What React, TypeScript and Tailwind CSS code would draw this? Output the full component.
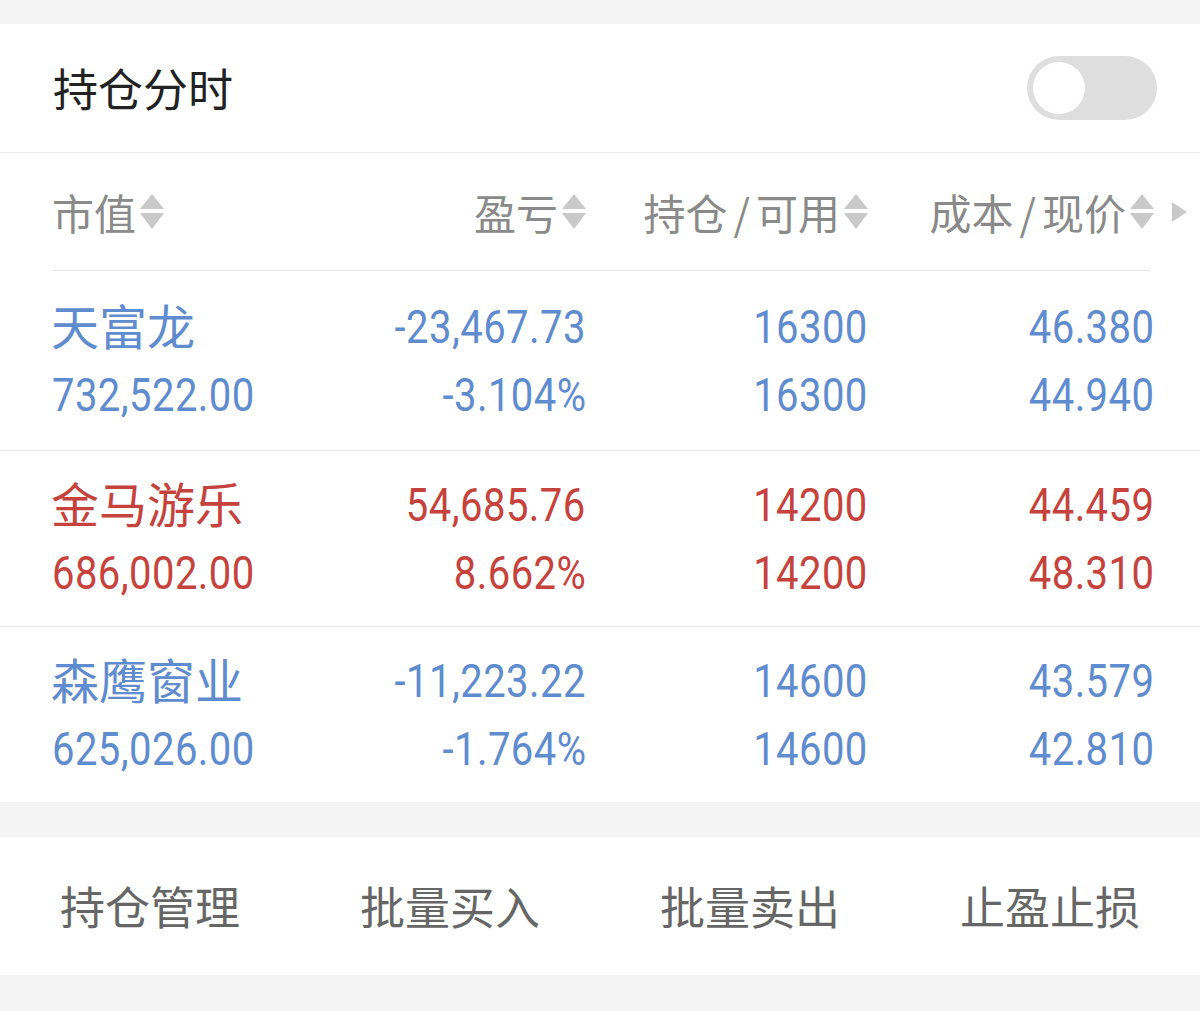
import React from 'react';

// Holdings panel — timeshare toggle, sortable header, position rows, action bar

type Row = {
  name: string;
  value: string;
  pnl: string;
  pct: string;
  hold: string;
  avail: string;
  cost: string;
  price: string;
  up: boolean;
  h: string;
};

const ROWS: Row[] = [
  { name: '天富龙', value: '732,522.00', pnl: '-23,467.73', pct: '-3.104%', hold: '16300', avail: '16300', cost: '46.380', price: '44.940', up: false, h: 'h-[180px]' },
  { name: '金马游乐', value: '686,002.00', pnl: '54,685.76', pct: '8.662%', hold: '14200', avail: '14200', cost: '44.459', price: '48.310', up: true, h: 'h-[176px]' },
  { name: '森鹰窗业', value: '625,026.00', pnl: '-11,223.22', pct: '-1.764%', hold: '14600', avail: '14600', cost: '43.579', price: '42.810', up: false, h: 'h-[175px]' },
];

const ACTIONS = ['持仓管理', '批量买入', '批量卖出', '止盈止损'];

const CJK = { fontFamily: '"Noto Sans CJK SC", sans-serif' };

function SortIcon() {
  return (
    <svg width="24" height="36" viewBox="0 0 24 36" className="ml-[4px] shrink-0">
      <polygon points="12,0 24,15 0,15" fill="#c9c9c9" />
      <polygon points="0,19 24,19 12,35" fill="#c9c9c9" />
    </svg>
  );
}

function HeaderCell({ label, right }: { label: string; right?: boolean }) {
  const parts = label.split('/');
  return (
    <div className={`flex items-center ${right ? 'justify-end' : 'justify-start'}`}>
      <span>
        {parts[0]}
        {parts.length > 1 && <span className="px-[6px]">/</span>}
        {parts[1]}
      </span>
      <SortIcon />
    </div>
  );
}

// condensed DIN-ish numerals: Roboto squeezed horizontally
function Num({ children, left }: { children: string; left?: boolean }) {
  return (
    <span
      className={`block scale-x-[0.87] ${left ? 'origin-left' : 'origin-right'} text-[46px] tracking-[0.5px]`}
      style={{ fontFamily: 'Roboto, "Noto Sans CJK SC", sans-serif' }}
    >
      {children}
    </span>
  );
}

export default function App() {
  return (
    <div className="w-[1200px] min-h-[1011px] bg-[#f4f4f4] pt-[24px]" style={CJK}>
      {/* Title + toggle */}
      <div className="bg-white">
        <div className="h-[129px] flex items-center justify-between pl-[53px] pr-[43px] border-b border-[#ececec]">
          <span className="text-[45px] text-[#222222]">持仓分时</span>
          <div className="w-[130px] h-[64px] rounded-full bg-[#dedede] flex items-center px-[6px]">
            <div className="w-[52px] h-[52px] rounded-full bg-white" />
          </div>
        </div>

        {/* Column header */}
        <div className="pl-[52px]">
          <div className="h-[118px] grid grid-cols-[248px_286px_282px_286px_1fr] items-center text-[42px] text-[#8a8a8a] border-b border-[#e6e6e6] mr-[50px]">
            <HeaderCell label="市值" />
            <HeaderCell label="盈亏" right />
            <HeaderCell label="持仓/可用" right />
            <HeaderCell label="成本/现价" right />
            <div className="flex items-center pl-[18px]">
              <svg width="15" height="20" viewBox="0 0 15 20">
                <polygon points="0,0 15,10 0,20" fill="#c9c9c9" />
              </svg>
            </div>
          </div>
        </div>

        {/* Positions */}
        {ROWS.map((r, i) => (
          <div
            key={r.name}
            className={`${r.h} ${i < ROWS.length - 1 ? 'border-b border-[#ececec]' : ''} pl-[52px] grid grid-cols-[248px_286px_282px_286px] content-center leading-[68px] ${r.up ? 'text-[#c6433d]' : 'text-[#5f8ccf]'}`}
          >
            <div className="flex flex-col">
              <span className="text-[48px] -ml-[1px] -translate-y-[3px]">{r.name}</span>
              <Num left>{r.value}</Num>
            </div>
            <div className="flex flex-col items-end">
              <Num>{r.pnl}</Num>
              <Num>{r.pct}</Num>
            </div>
            <div className="flex flex-col items-end">
              <Num>{r.hold}</Num>
              <Num>{r.avail}</Num>
            </div>
            <div className="flex flex-col items-end">
              <Num>{r.cost}</Num>
              <Num>{r.price}</Num>
            </div>
          </div>
        ))}
      </div>

      {/* Action bar */}
      <div className="mt-[35px] bg-white h-[138px] grid grid-cols-4 items-center text-center text-[45px] text-[#666666]">
        {ACTIONS.map((a) => (
          <span key={a}>{a}</span>
        ))}
      </div>
    </div>
  );
}
